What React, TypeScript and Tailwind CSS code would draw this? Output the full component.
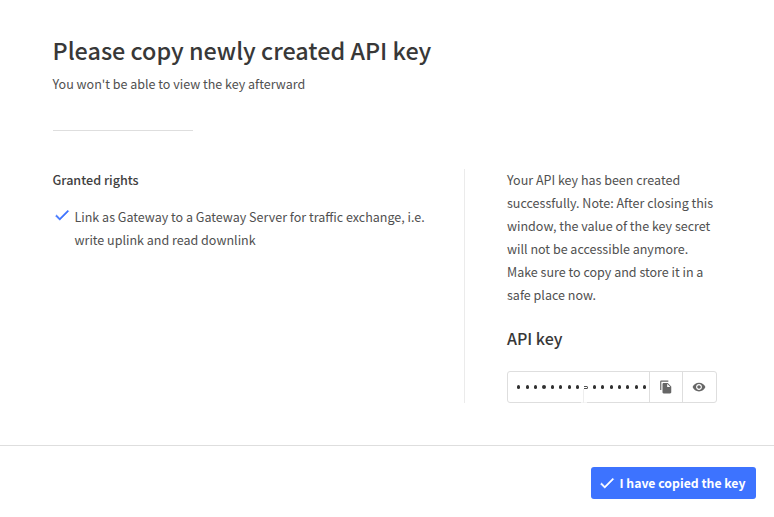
import { MdFileCopy, MdRemoveRedEye } from "react-icons/md";

const dots = Array.from({ length: 16 }, (_, i) => i);

function Check({ className }: { className: string }) {
  return (
    <svg viewBox="0 0 24 24" className={className} fill="currentColor" stroke="currentColor" strokeWidth="0.6">
      <path d="M9 16.17 4.83 12l-1.42 1.41L9 19 21 7l-1.41-1.41z" />
    </svg>
  );
}

export default function App() {
  return (
    <div className="flex h-[517px] w-[774px] flex-col overflow-hidden bg-white font-['Noto_Sans_CJK_SC',sans-serif] text-[12.53px] leading-[23px] text-[#505050]">
      <main className="h-[445px] pt-[35px] pl-[52.5px]">
        <h1 className="h-[30px] text-[23.37px] leading-[30px] font-medium whitespace-nowrap text-[#383838]"><span>Please copy newly created API key</span></h1>
        <p className="mt-[7px] whitespace-nowrap"><span>You won't be able to view the key afterward</span></p>
        <hr className="mt-[35px] ml-[0.5px] w-[140px] border-[#dedede]" />
        <div className="mt-[38px] flex h-[234px]">
          <section className="-mt-px w-[412px]">
            <h2 className="text-[12.6px] font-medium text-[#404040]"><span>Granted rights</span></h2>
            <div className="mt-[14px] flex">
              <Check className="mt-px size-[18px] text-[#3d73ff]" />
              <p className="ml-[4px] whitespace-nowrap">
                <span>Link as Gateway to a Gateway Server for traffic exchange, i.e.</span>
                <br />
                <span>write uplink and read downlink</span>
              </p>
            </div>
          </section>
          <div className="-ml-[0.5px] w-px bg-[#ebebeb]" />
          <section className="ml-[42px] w-[210px]">
            <p className="-mt-px whitespace-nowrap">
              <span>Your API key has been created</span><br />
              <span>successfully. Note: After closing this</span><br />
              <span>window, the value of the key secret</span><br />
              <span>will not be accessible anymore.</span><br />
              <span>Make sure to copy and store it in a</span><br />
              <span>safe place now.</span>
            </p>
            <h3 className="mt-5 text-[16px] leading-6 font-medium text-[#383838]"><span>API key</span></h3>
            <div className="mt-[21px] flex h-8 rounded-[3px] border border-[#dedede] text-[#666666]">
              <div className="flex w-[141px] items-center gap-[5.3px] pl-[9.3px]">
                {dots.map((i) =>
                  i === 8 ? (
                    <span key={i} className="relative h-[3px] w-[3.1px] shrink-0 rounded-r-full border-y border-r border-[#505050]">
                      <span className="absolute top-[15px] -left-[3px] h-px w-[6px] bg-[#f5f5f5]" />
                      <span className="absolute top-[2px] -left-px h-[14px] w-px bg-[#eeeeee]" />
                    </span>
                  ) : (
                    <span key={i} className="size-[3.1px] shrink-0 rounded-full bg-[#303030]" />
                  ),
                )}
              </div>
              <div className="flex w-[33px] items-center justify-center border-l border-[#dedede]"><MdFileCopy className="size-[14px]" /></div>
              <div className="flex flex-1 items-center justify-center border-l border-[#dedede] pr-px"><MdRemoveRedEye className="size-[14px]" /></div>
            </div>
          </section>
        </div>
      </main>
      <footer className="flex flex-1 items-start justify-end border-t border-[#dedede] pt-[21px] pr-[18px]">
        <button className="flex h-8 w-[165px] items-center rounded-[3px] bg-[#3d73ff] pl-[7px] text-[12.26px] font-bold whitespace-nowrap text-white">
          <Check className="mr-[3.5px] size-[18px]" />
          <span>I have copied the key</span>
        </button>
      </footer>
    </div>
  );
}
